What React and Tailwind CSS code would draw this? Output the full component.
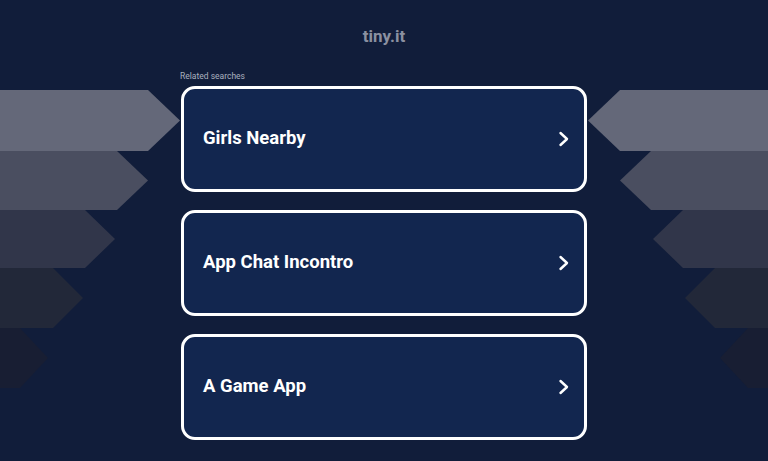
import { useState } from "react";

const searches = ["Girls Nearby", "App Chat Incontro", "A Game App"];

/* side arrows, left edge; right side is mirrored */
const bands = [
  { y: 90, h: 61, rect: 148, tip: 180, fill: "#646879" },
  { y: 151, h: 59, rect: 117, tip: 148, fill: "#4a4e60" },
  { y: 210, h: 58, rect: 85, tip: 115, fill: "#31364a" },
  { y: 268, h: 60, rect: 53, tip: 83, fill: "#222839" },
  { y: 328, h: 60, rect: 20, tip: 48, fill: "#181e33" },
];

function Backdrop() {
  return (
    <svg
      className="absolute inset-0 pointer-events-none"
      width="768"
      height="461"
      viewBox="0 0 768 461"
    >
      {bands.map((b, i) => {
        const mid = b.y + b.h / 2;
        const bot = b.y + b.h;
        const left = `0,${b.y} ${b.rect},${b.y} ${b.tip},${mid} ${b.rect},${bot} 0,${bot}`;
        const right = `768,${b.y} ${768 - b.rect},${b.y} ${768 - b.tip},${mid} ${768 - b.rect},${bot} 768,${bot}`;
        return (
          <g key={i} fill={b.fill}>
            <polygon points={left} />
            <polygon points={right} />
          </g>
        );
      })}
    </svg>
  );
}

function Chevron() {
  return (
    <svg width="12" height="16" viewBox="0 0 12 16" fill="none">
      <polyline
        points="2.5,2 9,8 2.5,14"
        stroke="white"
        strokeWidth="2.4"
        strokeLinecap="round"
        strokeLinejoin="round"
      />
    </svg>
  );
}

export default function App() {
  const [active, setActive] = useState(null);

  return (
    <div
      className="relative w-full h-[461px] overflow-hidden bg-[#111d3a]"
      style={{ fontFamily: "Roboto, 'Liberation Sans', sans-serif" }}
    >
      <Backdrop />

      <div className="relative flex flex-col items-center pt-[24px]">
        {/* Header */}
        <h1 className="text-[17px] leading-[24px] font-bold text-[#8b90a0]">tiny.it</h1>

        <div className="w-[406px] mt-[23px]">
          <p className="text-[8.5px] leading-[10px] text-[#aab0bf] mb-[5px] -ml-px">Related searches</p>

          {/* Search links */}
          <div className="flex flex-col gap-[18px]">
            {searches.map((s, i) => (
              <a
                key={s}
                href="#"
                onMouseEnter={() => setActive(i)}
                onMouseLeave={() => setActive(null)}
                className={`h-[106px] border-[3px] border-white rounded-[14px] flex items-center justify-between pl-[19px] pr-[14px] ${
                  active === i ? "bg-[#16306a]" : "bg-[#12264f]"
                }`}
              >
                <span className="text-[18.5px] font-bold text-white">{s}</span>
                <Chevron />
              </a>
            ))}
          </div>
        </div>
      </div>
    </div>
  );
}
